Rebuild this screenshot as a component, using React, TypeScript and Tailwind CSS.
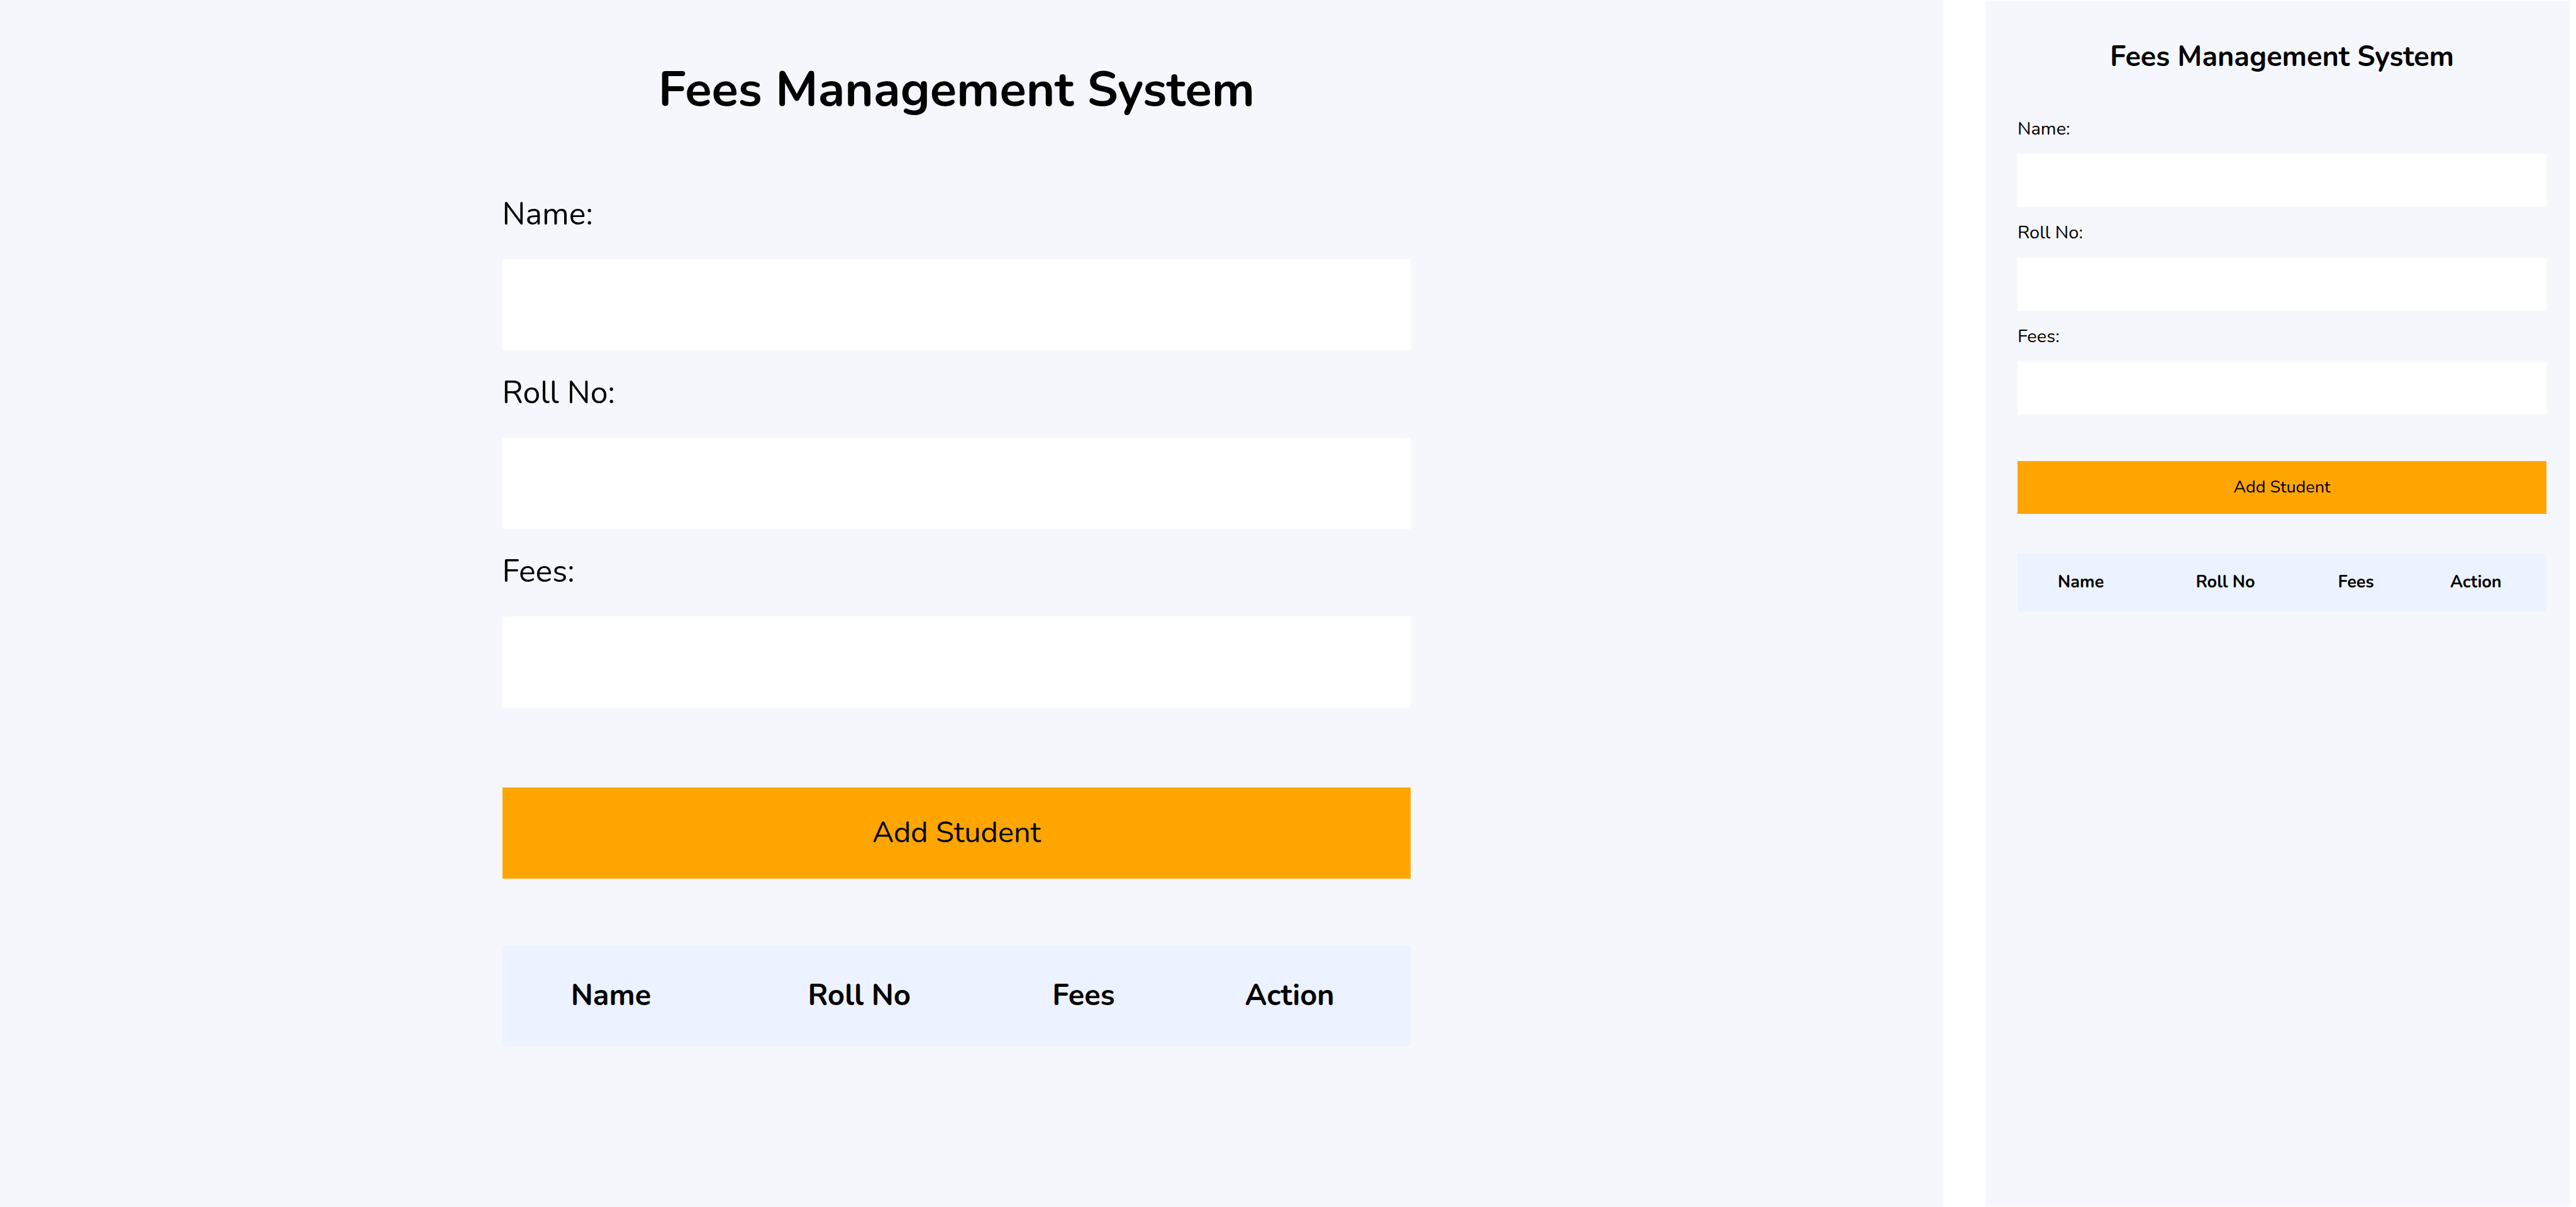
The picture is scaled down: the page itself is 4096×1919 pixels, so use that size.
import { useId } from "react";

type Theme = {
  page: string;
  body: string;
  title: string;
  fields: string;
  field: string;
  label: string;
  input: string;
  button: string;
  table: string;
  cell: string;
};

const desktop: Theme = {
  page: "pt-[91px] pr-12",
  body: "mx-auto w-[47.5%]",
  title: "text-[78px] leading-[104px]",
  fields: "mt-[110px] gap-8",
  field: "gap-[35px]",
  label: "text-[50px] leading-[72px]",
  input: "h-[145px] px-8 text-[47px]",
  button: "mt-[127px] h-[145px] text-[47px]",
  table: "mt-[107px]",
  cell: "h-[159px] text-[47px]",
};

const mobile: Theme = {
  page: "my-px pt-[59px] pr-[38px] pl-[51px]",
  body: "w-full",
  title: "text-[45px] leading-[62px]",
  fields: "mt-[62px] gap-5",
  field: "gap-[19px]",
  label: "text-[29px] leading-[42px]",
  input: "h-[84px] px-5 text-[27px]",
  button: "mt-[74px] h-[84px] text-[27px]",
  table: "mt-[63px]",
  cell: "h-[92px] text-[27px]",
};

const fields = ["Name:", "Roll No:", "Fees:"];
const columns = ["Name", "Roll No", "Fees", "Action"];

function FeesPage({ theme }: { theme: Theme }) {
  const id = useId();
  return (
    <section className={`bg-[#f6f7fc] ${theme.page}`}>
      <div className={theme.body}>
        <h1 className={`text-center font-bold whitespace-nowrap ${theme.title}`}>
          Fees Management System
        </h1>
        <form onSubmit={(e) => e.preventDefault()}>
          <div className={`flex flex-col ${theme.fields}`}>
            {fields.map((text, i) => (
              <div key={text} className={`flex flex-col ${theme.field}`}>
                <label htmlFor={`${id}-${i}`} className={theme.label}>
                  {text}
                </label>
                <input
                  id={`${id}-${i}`}
                  type="text"
                  className={`w-full bg-white outline-none ${theme.input}`}
                />
              </div>
            ))}
          </div>
          <button type="submit" className={`block w-full bg-[#ffa500] ${theme.button}`}>
            Add Student
          </button>
        </form>
        <table className={`w-full bg-[#ecf2ff] ${theme.table}`}>
          <thead>
            <tr>
              {columns.map((c) => (
                <th key={c} scope="col" className={`p-0 text-center font-bold ${theme.cell}`}>
                  {c}
                </th>
              ))}
            </tr>
          </thead>
        </table>
      </div>
    </section>
  );
}

export default function App() {
  return (
    <main className="grid min-h-screen grid-cols-[3090fr_930fr] gap-[67px] bg-white pr-[9px] font-[Nunito,Lato,sans-serif] text-black">
      <FeesPage theme={desktop} />
      <FeesPage theme={mobile} />
    </main>
  );
}
